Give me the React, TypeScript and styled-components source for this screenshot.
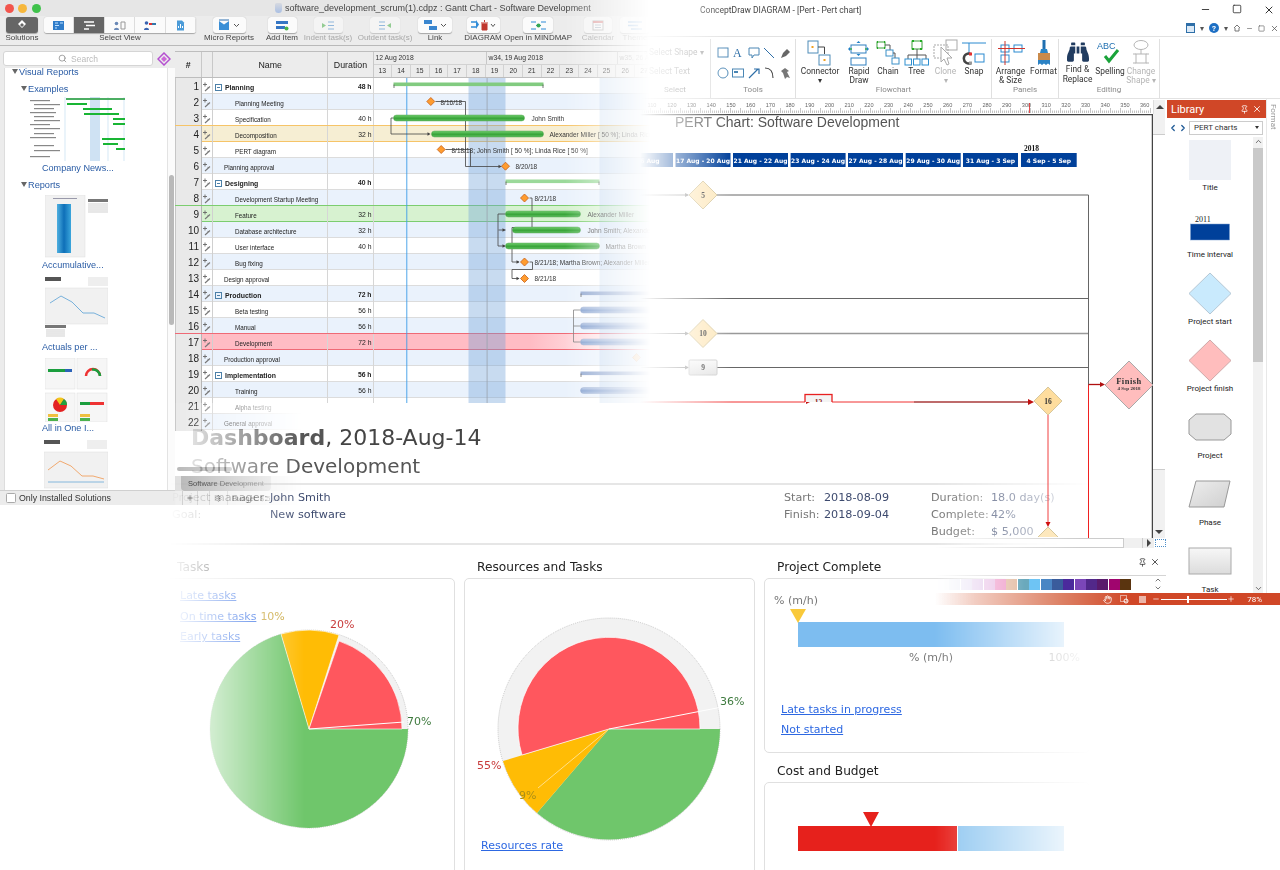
import React from 'react';
import styled, { createGlobalStyle } from 'styled-components';
import { Minus, Square, X, Pin, Hand, Search, ChevronLeft, ChevronRight, ChevronUp, ChevronDown, Plus, Settings } from 'lucide-react';
import { FaBinoculars } from 'react-icons/fa';

const SANS = `"Liberation Sans", Arial, sans-serif`;
const VERDANA = `"DejaVu Sans", Verdana, sans-serif`;
const SERIF = `"Liberation Serif", serif`;
const UI = `Roboto, "Liberation Sans", sans-serif`;

const Global = createGlobalStyle`
  html, body { margin: 0; padding: 0; background: #fff; }
  body { font-family: ${SANS}; }
`;

const Stage = styled.div`
  position: relative;
  width: 1280px;
  height: 870px;
  overflow: hidden;
  background: #fff;
`;

/* ---------- Gantt window ---------- */
const GanttWindow = styled.section`
  position: absolute;
  left: 0;
  top: 0;
  width: 660px;
  height: 505px;
  display: flex;
  flex-direction: column;
  background: #ececec;
  mask-image: linear-gradient(to right, #000 565px, transparent 650px);
  -webkit-mask-image: linear-gradient(to right, #000 565px, transparent 650px);
`;
const MacTitle = styled.div`
  height: 16px;
  display: flex;
  align-items: center;
  background: #e6e6e6;
  font-size: 9px;
  color: #444;
`;
const Lights = styled.div`
  width: 275px;
  display: flex;
  gap: 4.500px;
  padding-left: 4.500px;
  box-sizing: border-box;
`;
const Light = styled.span<{ $c: string }>`
  width: 9px;
  height: 9px;
  border-radius: 50%;
  background: ${p => p.$c};
`;
const DocGlyph = styled.span`
  width: 7px;
  height: 10px;
  margin-right: 3px;
  border-radius: 2px 2px 4px 4px;
  background: linear-gradient(#d6d9e0, #a9bfe3);
`;
const MacToolbar = styled.div`
  height: 30px;
  display: flex;
  border-bottom: 1px solid #b9b9b9;
  box-sizing: border-box;
`;
const ToolItem = styled.div<{ $w: number; $ml?: number; $dim?: boolean }>`
  width: ${p => p.$w}px;
  margin-left: ${p => p.$ml || 0}px;
  padding-top: 1px;
  display: flex;
  flex-direction: column;
  align-items: center;
  flex: none;
  color: ${p => (p.$dim ? '#a8a8a8' : '#444')};
`;
const ToolLabel = styled.span`
  font-size: 8px;
  line-height: 12px;
  margin-top: -1px;
  white-space: nowrap;
`;
const ToolButton = styled.div<{ $w: number; $dark?: boolean; $dim?: boolean }>`
  width: ${p => p.$w}px;
  height: 16px;
  flex: none;
  display: flex;
  align-items: center;
  justify-content: center;
  border-radius: 3px;
  background: ${p => (p.$dark ? '#666' : '#fbfbfb')};
  box-shadow: 0 0.5px 1px rgba(0, 0, 0, 0.3);
  opacity: ${p => (p.$dim ? 0.55 : 1)};
`;
const Segments = styled.div`
  display: flex;
  height: 16px;
  border-radius: 3px;
  overflow: hidden;
  flex: none;
  box-shadow: 0 0.5px 1px rgba(0, 0, 0, 0.3);
`;
const Segment = styled.div<{ $on?: boolean }>`
  width: 30.4px;
  display: flex;
  align-items: center;
  justify-content: center;
  background: ${p => (p.$on ? '#666' : '#fbfbfb')};
  border-right: 1px solid #ddd;
  box-sizing: border-box;
`;
const MacBody = styled.div`
  flex: 1;
  display: flex;
  min-height: 0;
`;
const Sidebar = styled.aside`
  width: 175px;
  flex: none;
  display: flex;
  flex-direction: column;
`;
const SearchRow = styled.div`
  height: 22px;
  display: flex;
  align-items: flex-end;
  padding: 0 0 2px 3px;
  gap: 4px;
  box-sizing: border-box;
`;
const SearchBox = styled.div`
  width: 150px;
  height: 15px;
  background: #fff;
  border: 1px solid #d5d5d5;
  border-radius: 3px;
  display: flex;
  align-items: center;
  justify-content: center;
  gap: 4px;
  font-size: 8.5px;
  color: #bbb;
  box-sizing: border-box;
`;
const TreeWrap = styled.div`
  height: 422px;
  display: flex;
  padding-left: 4px;
`;
const Tree = styled.div`
  flex: 1;
  background: #fff;
  overflow: hidden;
  border-left: 1px solid #ddd;
  padding-top: 3px;
`;
const SideScroll = styled.div`
  width: 8px;
  flex: none;
  background: #fbfbfb;
  border-left: 1px solid #e3e3e3;
  box-sizing: border-box;
  padding: 107px 1px 0 1px;
`;
const SideThumb = styled.div`
  height: 150px;
  border-radius: 3px;
  background: #b9b9b9;
`;
const TreeHead = styled.div<{ $l: number; $mt: number }>`
  margin: ${p => p.$mt}px 0 0 ${p => p.$l}px;
  height: 14px;
  font-size: 9.2px;
  line-height: 14px;
  color: #2a5ca5;
  white-space: nowrap;
  &::before {
    content: '';
    display: inline-block;
    border: 3px solid transparent;
    border-top: 5px solid #666;
    border-bottom: 0;
    margin-right: 1px;
    vertical-align: 1px;
  }
`;
const ThumbBox = styled.div<{ $ml: number; $mt: number }>`
  margin: ${p => p.$mt}px 0 0 ${p => p.$ml}px;
  line-height: 0;
`;
const Caption = styled.div<{ $mt: number }>`
  margin: ${p => p.$mt}px 0 0 37px;
  height: 14px;
  line-height: 14px;
  font-size: 9.100px;
  color: #2a5ca5;
  white-space: nowrap;
`;
const SideFoot = styled.label`
  flex: 1;
  display: flex;
  align-items: center;
  gap: 3px;
  padding-left: 6px;
  font-size: 8.8px;
  color: #333;
  background: #ececec;
  border-top: 1px solid #d0d0d0;
`;
const Check = styled.span`
  width: 8px;
  height: 8px;
  background: #fff;
  border: 1px solid #aaa;
  border-radius: 1.5px;
`;
const TableWrap = styled.div`
  flex: 1;
  position: relative;
  padding-top: 5px;
  overflow: hidden;
  display: flex;
  flex-direction: column;
`;
const TableHead = styled.div`
  display: grid;
  grid-template-columns: 26.5px 11.5px 114.5px 46px 1fr;
  height: 27px;
  flex: none;
  box-sizing: border-box;
  background: #ececec;
  border-top: 1px solid #bdbdbd;
  border-bottom: 1px solid #bdbdbd;
`;
const RowsBox = styled.div`
  height: 384px;
  flex: none;
  overflow: hidden;
  background: #fff;
`;
const PillRow = styled.div`
  height: 14px;
  flex: none;
  display: flex;
  align-items: center;
  padding-left: 2px;
  background: #fff;
`;
const Pill = styled.div`
  width: 55px;
  height: 4px;
  border-radius: 2px;
  background: #b5b5b5;
`;
const TabRow = styled.div`
  height: 15px;
  flex: none;
  padding-left: 6px;
  background: #dedede;
`;
const SheetTab = styled.div`
  width: 90px;
  height: 15px;
  line-height: 15px;
  text-align: center;
  font-size: 7.500px;
  color: #222;
  background: #b4b4b4;
  border-radius: 0 0 4px 4px;
`;
const FootBar = styled.div`
  flex: 1;
  display: flex;
  align-items: center;
  padding-left: 7px;
  font-size: 7.500px;
  color: #444;
  background: #eee;
`;
const FootCell = styled.div<{ $w: number }>`
  width: ${p => p.$w}px;
  height: 100%;
  flex: none;
  display: flex;
  align-items: center;
  justify-content: center;
  border-left: 1px solid #ccc;
  box-sizing: border-box;
`;
const HeadCell = styled.div<{ $bold?: boolean }>`
  display: flex;
  align-items: center;
  justify-content: center;
  font-size: 8.8px;
  font-weight: ${p => (p.$bold ? 700 : 400)};
  color: #222;
  border-right: 1px solid #c8c8c8;
  border-left: 1px solid transparent;
`;
const Timehead = styled.div`
  display: flex;
  flex-direction: column;
  font-size: 6.8px;
  color: #333;
  overflow: hidden;
`;
const Weeks = styled.div`
  display: flex;
  height: 13px;
  border-bottom: 1px solid #d2d2d2;
`;
const Week = styled.div<{ $w: number; $dim?: boolean }>`
  width: ${p => p.$w}px;
  flex: none;
  line-height: 12px;
  padding-left: 2px;
  box-sizing: border-box;
  white-space: nowrap;
  border-right: 1px solid #c8c8c8;
  color: ${p => (p.$dim ? '#999' : '#333')};
`;
const Days = styled.div`
  display: flex;
  flex: 1;
`;
const Day = styled.div`
  width: 18.7px;
  flex: none;
  text-align: center;
  line-height: 12px;
  border-right: 1px solid #d2d2d2;
  box-sizing: border-box;
`;
const TONES: Record<string, { bg: string; line: string }> = {
  yellow: { bg: '#f6eed3', line: '#f6c468' },
  green: { bg: '#d7f2d0', line: '#7ccd6f' },
  red: { bg: 'linear-gradient(to right, #ffbcc4 355px, transparent 470px)', line: '#ef6a76' },
};
const Row = styled.div<{ $alt: boolean; $tone?: string }>`
  display: grid;
  grid-template-columns: 26.5px 11.5px 114.5px 46px 1fr;
  height: 16.03px;
  box-sizing: border-box;
  font-size: 6.3px;
  color: #222;
  background: ${p => (p.$tone ? TONES[p.$tone].bg : p.$alt ? '#eaf2fc' : '#fff')};
  border-bottom: 1px solid ${p => (p.$tone ? TONES[p.$tone].line : '#dcdcdc')};
  box-shadow: ${p => (p.$tone ? `0 -1px 0 ${TONES[p.$tone].line}` : 'none')};
  position: relative;
`;
const NumCell = styled.div`
  background: #e9e9e9;
  text-align: right;
  padding-right: 1.5px;
  font-size: 10px;
  line-height: 17px;
  color: #222;
  border-left: 1px solid #c6c6c6;
  border-right: 1px solid #b5b5b5;
`;
const IconCell = styled.div`
  display: flex;
  align-items: center;
  justify-content: center;
  border-right: 1px solid #d0d0d0;
`;
const NameCell = styled.div<{ $l: number; $bold: boolean }>`
  display: flex;
  align-items: center;
  gap: 3px;
  padding: 1px 0 0 ${p => p.$l}px;
  font-weight: ${p => (p.$bold ? 700 : 400)};
  font-size: ${p => (p.$bold ? 6.9 : 6.3)}px;
  border-right: 1px solid #d6d6d6;
  white-space: nowrap;
`;
const Collapse = styled.span`
  width: 5px;
  height: 5px;
  border: 0.5px solid #4c80a8;
  position: relative;
  flex: none;
  &::after {
    content: '';
    position: absolute;
    left: 1px;
    right: 1px;
    top: 2.2px;
    height: 0.6px;
    background: #4c80a8;
  }
`;
const DurCell = styled.div<{ $bold: boolean }>`
  text-align: right;
  padding-right: 1px;
  line-height: 17px;
  font-size: 6.8px;
  font-weight: ${p => (p.$bold ? 700 : 400)};
  border-right: 1px solid #d6d6d6;
`;
const ChartLayer = styled.svg`
  position: absolute;
  left: 198.5px;
  top: 32px;
  pointer-events: none;
  text {
    font-family: ${SANS};
    font-size: 6.5px;
    fill: #333;
  }
`;

/* ---------- Dashboard ---------- */
const Dashboard = styled.section`
  position: absolute;
  left: 164px;
  top: 403px;
  width: 936px;
  height: 467px;
  overflow: hidden;
  background: #fff;
  font-family: ${VERDANA};
  mask-image: linear-gradient(to right, transparent 4px, #000 140px, #000 771px, transparent 928px);
  -webkit-mask-image: linear-gradient(to right, transparent 4px, #000 140px, #000 771px, transparent 928px);
`;
const DashHeader = styled.header`
  height: 82px;
  box-sizing: border-box;
  padding: 21px 0 0 27px;
  border-bottom: 2px solid #e6e6e6;
`;
const DashTitle = styled.h1`
  margin: 0;
  font-size: 22px;
  line-height: 28px;
  font-weight: 400;
  color: #444;
  white-space: nowrap;
  b { font-weight: 700; color: #555; }
`;
const DashSub = styled.h2`
  margin: 0;
  font-size: 20px;
  line-height: 28px;
  font-weight: 400;
  color: #555;
`;
const InfoBar = styled.div`
  height: 60px;
  display: flex;
  padding: 4px 0 0 8px;
  box-sizing: border-box;
  border-bottom: 2px solid #e6e6e6;
  font-size: 11.2px;
  line-height: 17px;
`;
const InfoCol = styled.div<{ $w: number }>`
  width: ${p => p.$w}px;
  flex: none;
`;
const InfoLine = styled.div`
  display: flex;
  white-space: nowrap;
`;
const InfoKey = styled.span<{ $w: number }>`
  width: ${p => p.$w}px;
  flex: none;
  color: #777;
`;
const InfoVal = styled.span`
  color: #3d4a6e;
`;
const Panels = styled.div`
  display: grid;
  grid-template-columns: 291px 291px 326px;
  column-gap: 9px;
  margin-right: -20px;
`;
const PanelCol = styled.div`
  display: flex;
  flex-direction: column;
`;
const PanelHead = styled.h3<{ $h: number; $pt: number }>`
  margin: 0;
  height: ${p => p.$h}px;
  flex: none;
  padding: ${p => p.$pt}px 0 0 13px;
  box-sizing: border-box;
  font-size: 12.2px;
  line-height: 14px;
  font-weight: 400;
  color: #222;
`;
const PanelBox = styled.div<{ $h: number }>`
  position: relative;
  height: ${p => p.$h}px;
  flex: none;
  border: 1px solid #e0e0e0;
  border-radius: 5px;
  box-sizing: border-box;
`;
const LinkList = styled.div`
  position: absolute;
  left: 15px;
  top: 10px;
  display: flex;
  flex-direction: column;
  gap: 6px;
  font-size: 11px;
  line-height: 14.5px;
  white-space: nowrap;
`;
const LinkA = styled.a`
  color: #2d68e2;
  text-decoration: underline;
`;
const Pct = styled.span`
  margin-left: 4px;
  color: #c9a63c;
`;
const RateLink = styled(LinkA)`
  position: absolute;
  left: 16px;
  top: 260px;
  font-size: 11px;
`;
const PieSvg = styled.svg`
  display: block;
  text { font-family: ${VERDANA}; font-size: 11px; }
`;
const GaugeTop = styled.div`
  padding: 14px 0 0 9px;
  font-size: 11px;
  line-height: 15px;
  color: #777;
`;
const GaugeWrap = styled.div<{ $mt: number }>`
  position: relative;
  width: 266px;
  height: 25px;
  margin: ${p => p.$mt}px 0 0 33px;
  display: flex;
`;
const BarPart = styled.div<{ $w: number; $c: string }>`
  width: ${p => p.$w}px;
  flex: none;
  background: ${p => p.$c};
`;
const Marker = styled.span<{ $x: number; $c: string; $h: number }>`
  position: absolute;
  left: ${p => p.$x}px;
  top: ${p => -p.$h + 1}px;
  width: 0;
  height: 0;
  border-left: 8px solid transparent;
  border-right: 8px solid transparent;
  border-top: ${p => p.$h}px solid ${p => p.$c};
  margin-left: -8px;
`;
const GaugeLabels = styled.div`
  position: relative;
  width: 266px;
  height: 15px;
  margin: 3px 0 0 33px;
  text-align: center;
  font-size: 11px;
  line-height: 15px;
  color: #777;
`;
const GaugeEnd = styled.span`
  position: absolute;
  right: -16px;
  top: 0;
`;
const LinksBlock = styled.div`
  display: flex;
  flex-direction: column;
  gap: 5.500px;
  margin: 38px 0 0 16px;
  font-size: 11px;
  line-height: 14.5px;
`;

/* ---------- Diagram window ---------- */
const DiagramWindow = styled.section`
  position: absolute;
  left: 600px;
  top: 0;
  width: 680px;
  height: 605px;
  display: flex;
  flex-direction: column;
  font-family: ${UI};
  mask-image: linear-gradient(to right, transparent 40px, #000 132px);
  -webkit-mask-image: linear-gradient(to right, transparent 40px, #000 132px);
`;
const WinTitle = styled.div`
  height: 20px;
  display: flex;
  align-items: center;
  padding-left: 100px;
  font-size: 8.500px;
  color: #444;
`;
const WinControls = styled.div`
  margin-left: auto;
  display: flex;
  gap: 21px;
  padding-right: 5px;
  color: #333;
`;
const WinRow2 = styled.div`
  height: 17px;
  display: flex;
  justify-content: flex-end;
  align-items: center;
  gap: 5px;
  padding-right: 1px;
  border-bottom: 1px solid #e2e2e2;
  box-sizing: border-box;
  color: #555;
  font-size: 8px;
`;
const Ribbon = styled.div`
  height: 62px;
  display: flex;
  padding: 2px 0 0 40px;
  box-sizing: border-box;
  border-bottom: 1px solid #e2e2e2;
`;
const RibbonGroup = styled.div<{ $w: number }>`
  width: ${p => p.$w}px;
  flex: none;
  display: flex;
  flex-direction: column;
  border-right: 1px solid #e0e0e0;
  box-sizing: border-box;
`;
const GroupBody = styled.div`
  flex: 1;
  display: flex;
  min-height: 0;
`;
const GroupName = styled.div`
  height: 14px;
  text-align: center;
  font-size: 8px;
  line-height: 12px;
  color: #8a8a8a;
`;
const BigItem = styled.div<{ $w: number; $dim?: boolean }>`
  width: ${p => p.$w}px;
  flex: none;
  display: flex;
  flex-direction: column;
  align-items: center;
  font-size: 8.400px;
  line-height: 9.4px;
  text-align: center;
  color: ${p => (p.$dim ? '#b5b5b5' : '#333')};
  white-space: pre-line;
  padding-top: 1px;
`;
const BigIcon = styled.div`
  height: 26px;
  display: flex;
  align-items: center;
  justify-content: center;
  margin-bottom: 1px;
`;
const ToolGrid = styled.div`
  display: grid;
  grid-template-columns: repeat(5, 15.4px);
  grid-auto-rows: 20px;
  padding: 8px 0 0 6px;
`;
const SelectStack = styled.div`
  display: flex;
  flex-direction: column;
  gap: 9px;
  padding: 8px 0 0 4px;
  font-size: 8.4px;
  color: #aaa;
  white-space: nowrap;
`;
const Workspace = styled.div`
  flex: 1;
  display: flex;
  min-height: 0;
`;
const MainCol = styled.div`
  width: 566px;
  flex: none;
  display: flex;
  flex-direction: column;
`;
const RulerRow = styled.div`
  height: 15px;
  display: flex;
  padding-top: 1px;
  box-sizing: border-box;
  margin-left: 40px;
  margin-right: 1px;
`;
const RulerSvg = styled.svg`
  flex: 1;
  height: 14px;
  text { font-family: ${SANS}; font-size: 5.6px; fill: #666; }
`;
const CanvasRow = styled.div`
  height: 424px;
  display: flex;
`;
const CanvasSvg = styled.svg`
  display: block;
  width: 553px;
  height: 424px;
  flex: none;
`;
const VScroll = styled.div`
  width: 12px;
  flex: none;
  display: flex;
  flex-direction: column;
  background: #f1f1f1;
`;
const ScrollThumb = styled.div`
  height: 336px;
  margin-top: 20px;
  background: #fff;
  border-top: 1px solid #ccc;
  border-bottom: 1px solid #ccc;
  box-sizing: border-box;
`;
const ScrollArrow = styled.div<{ $dir: 'up' | 'down' | 'right' }>`
  width: 0;
  height: 0;
  align-self: center;
  ${p =>
    p.$dir === 'up'
      ? 'border-left:4px solid transparent;border-right:4px solid transparent;border-bottom:4px solid #444;'
      : p.$dir === 'down'
      ? 'border-left:4px solid transparent;border-right:4px solid transparent;border-top:4px solid #444;margin-top:auto;margin-bottom:4px;'
      : 'border-top:4px solid transparent;border-bottom:4px solid transparent;border-left:4px solid #444;'}
`;
const RulerArrowBox = styled.div`
  width: 12px;
  flex: none;
  display: flex;
  align-items: center;
  justify-content: center;
  background: #f1f1f1;
  border-left: 1px solid #ddd;
  box-sizing: border-box;
`;
const HScrollRow = styled.div`
  height: 10px;
  display: flex;
  align-items: stretch;
  padding-left: 335px;
  mask-image: linear-gradient(to right, transparent 335px, #000 480px);
  -webkit-mask-image: linear-gradient(to right, transparent 335px, #000 480px);
`;
const HTrack = styled.div`
  flex: 1;
  background: #fff;
  border: 1px solid #ccc;
  border-left: 0;
`;
const HThumb = styled.div`
  width: 18px;
  flex: none;
  background: #f0f0f0;
`;
const HArrow = styled.div`
  width: 12px;
  flex: none;
  display: flex;
  align-items: center;
  justify-content: center;
  background: #eee;
  border-left: 1px solid #ccc;
  box-sizing: border-box;
`;
const HCorner = styled.div`
  width: 11px;
  flex: none;
  box-sizing: border-box;
  border: 1px dotted #4f8fc8;
  margin: 1px 0 1px 1px;
`;
const PalHead = styled.div`
  height: 27px;
  display: flex;
  justify-content: flex-end;
  align-items: center;
  gap: 3px;
  padding: 1px 6px 0 0;
  box-sizing: border-box;
  color: #333;
`;
const Palette = styled.div`
  height: 17px;
  display: flex;
  align-items: center;
  margin-left: 335px;
  padding: 0 4px 0 3px;
  border-top: 1px solid #d4d4d4;
  box-sizing: border-box;
  background: #fff;
  mask-image: linear-gradient(to right, transparent 0, #000 90px);
  -webkit-mask-image: linear-gradient(to right, transparent 0, #000 90px);
`;
const Swatch = styled.span<{ $c: string }>`
  width: 11px;
  height: 11px;
  flex: none;
  background: ${p => p.$c};
  margin-right: 0.4px;
`;
const PalSpin = styled.div`
  margin-left: auto;
  display: flex;
  flex-direction: column;
  color: #333;
  line-height: 0;
`;
const Library = styled.aside`
  width: 99px;
  flex: none;
  margin: 1px 0 0 1px;
  display: flex;
  flex-direction: column;
  font-size: 8px;
  color: #222;
  background: #fff;
`;
const LibHead = styled.div`
  height: 18px;
  background: #d04727;
  color: #fff;
  display: flex;
  align-items: center;
  padding: 0 4px;
  gap: 3px;
  font-size: 11px;
`;
const LibTitle = styled.span`
  margin-right: auto;
`;
const LibPick = styled.div`
  height: 19px;
  display: flex;
  align-items: center;
  padding-left: 1px;
  color: #1f5a96;
  box-sizing: border-box;
`;
const LibSelect = styled.div`
  width: 74px;
  height: 14px;
  margin-left: 1px;
  display: flex;
  align-items: center;
  justify-content: space-between;
  padding: 0 3px 0 4px;
  border: 1px solid #ccc;
  box-sizing: border-box;
  color: #333;
  font-size: 8px;
  &::after {
    content: '';
    border-left: 2.5px solid transparent;
    border-right: 2.5px solid transparent;
    border-top: 3px solid #333;
  }
`;
const LibList = styled.div`
  flex: 1;
  display: flex;
  min-height: 0;
`;
const LibItems = styled.div`
  width: 86px;
  flex: none;
  overflow: hidden;
`;
const LibItem = styled.div`
  height: 67px;
  display: flex;
  flex-direction: column;
  align-items: center;
  line-height: 12px;
  svg { display: block; flex: none; }
  svg text { font-family: ${SERIF}; font-size: 8px; fill: #222; }
`;
const LibScroll = styled.div`
  width: 10px;
  flex: none;
  display: flex;
  flex-direction: column;
  align-items: center;
  background: #f1f1f1;
  color: #444;
`;
const LibThumb = styled.div`
  width: 100%;
  height: 214px;
  flex: none;
  margin-top: 2px;
  background: #c9c9c9;
`;
const SpinDown = styled.span`
  margin-top: auto;
  line-height: 0;
`;
const FormatTab = styled.div`
  flex: 1;
  border-left: 1px solid #e8e8e8;
  display: flex;
  justify-content: flex-start;
  align-items: center;
  padding-top: 5px;
  font-size: 8px;
  color: #999;
  writing-mode: vertical-rl;
`;
const StatusBar = styled.footer`
  height: 12px;
  flex: none;
  display: flex;
  align-items: center;
  justify-content: flex-end;
  padding-right: 18px;
  color: #fff;
  font-size: 8px;
  background: linear-gradient(to right, transparent 335px, #f2cdc2 375px, #dd8266 460px, #d04727 530px);
`;
const StatusSlot = styled.span<{ $ml: number }>`
  display: flex;
  margin-left: ${p => p.$ml}px;
`;
const ZoomSlider = styled.div`
  position: relative;
  width: 66px;
  height: 1px;
  background: #fff;
  &::after {
    content: '';
    position: absolute;
    left: 26px;
    top: -3px;
    width: 2px;
    height: 7px;
    background: #fff;
  }
`;

/* ---------- data ---------- */
const rows: { name: string; l: number; s?: boolean; d?: string; t?: string }[] = [
  { name: 'Planning', l: 0, s: true, d: '48 h' },
  { name: 'Planning Meeting', l: 2 },
  { name: 'Specification', l: 2, d: '40 h' },
  { name: 'Decomposition', l: 2, d: '32 h', t: 'yellow' },
  { name: 'PERT diagram', l: 2 },
  { name: 'Planning approval', l: 1 },
  { name: 'Designing', l: 0, s: true, d: '40 h' },
  { name: 'Development Startup Meeting', l: 2 },
  { name: 'Feature', l: 2, d: '32 h', t: 'green' },
  { name: 'Database architecture', l: 2, d: '32 h' },
  { name: 'User interface', l: 2, d: '40 h' },
  { name: 'Bug fixing', l: 2 },
  { name: 'Design approval', l: 1 },
  { name: 'Production', l: 0, s: true, d: '72 h' },
  { name: 'Beta testing', l: 2, d: '56 h' },
  { name: 'Manual', l: 2, d: '56 h' },
  { name: 'Development', l: 2, d: '72 h', t: 'red' },
  { name: 'Production approval', l: 1 },
  { name: 'Implementation', l: 0, s: true, d: '56 h' },
  { name: 'Training', l: 2, d: '56 h' },
  { name: 'Alpha testing', l: 2 },
  { name: 'General approval', l: 1 },
];

const RowGlyph = () => (
  <svg width="10" height="10" viewBox="0 0 10 10">
    <path d="M3 0.5v4M1 2.5h4" stroke="#666" strokeWidth="0.9" />
    <path d="M3 9l5-4.5M5.5 5.2l2 0.5" stroke="#777" strokeWidth="1.1" fill="none" />
  </svg>
);

const Milestone = ({ x, y, o = 1 }: { x: number; y: number; o?: number }) => (
  <path
    d={`M${x} ${y - 4}L${x + 4} ${y}L${x} ${y + 4}L${x - 4} ${y}Z`}
    fill="#ff9c2f"
    stroke="#c4601a"
    strokeWidth="0.8"
    opacity={o}
  />
);
const Bar = ({ x, w, y, c }: { x: number; w: number; y: number; c: string }) => (
  <rect x={x} y={y - 3} width={w} height={6} rx={3} fill={`url(#${c})`} stroke={c === 'gb' ? '#3e9b3e' : '#7a93c0'} strokeWidth="0.4" />
);
const Summary = ({ x, w, y, c }: { x: number; w: number; y: number; c: string }) => (
  <g>
    <rect x={x} y={y - 2} width={w} height={3.6} fill={c} />
    <path d={`M${x + 0.5} ${y}v3.5M${x + w - 0.5} ${y}v3.5`} stroke="#555" strokeWidth="0.8" />
  </g>
);
const Arrow = ({ x, y, c = '#444' }: { x: number; y: number; c?: string }) => (
  <path d={`M${x} ${y}l-3 -1.8v3.6Z`} fill={c} />
);

const GanttChart = () => (
  <ChartLayer width="287" height="360" viewBox="373.5 78.5 287 360">
    <defs>
      <linearGradient id="gb" x1="0" y1="0" x2="0" y2="1">
        <stop offset="0" stopColor="#74cf72" />
        <stop offset="0.55" stopColor="#37a438" />
        <stop offset="1" stopColor="#62bf62" />
      </linearGradient>
      <linearGradient id="bb" x1="0" y1="0" x2="0" y2="1">
        <stop offset="0" stopColor="#b7c8e6" />
        <stop offset="0.55" stopColor="#7e9ccd" />
        <stop offset="1" stopColor="#a2b7dc" />
      </linearGradient>
    </defs>
    <rect x="468" y="78.5" width="37" height="360" fill="rgba(110,160,215,0.38)" />
    <rect x="599" y="78.5" width="60" height="360" fill="rgba(110,160,215,0.2)" />
    <path d="M486.6 78.5v360" stroke="#9ba3ad" strokeWidth="0.8" />
    <path d="M406.3 78.5v360" stroke="#3c9ce8" strokeWidth="0.9" />

    <Summary x={393} w={150} y={85} c="#82cb80" />
    <Summary x={505} w={94} y={182} c="#9bd99a" />
    <Summary x={580} w={90} y={294} c="#8fa6cf" />
    <Summary x={580} w={90} y={374} c="#8fa6cf" />

    <g fill="none" stroke="#444" strokeWidth="0.8">
      <path d="M435 102h30v65h36" />
      <path d="M393 118.5h-2.500v16h37" />
      <path d="M445 150h25v17" />
      <path d="M529 198.500h2.500v29.500h-20v34.500h7" />
      <path d="M505 214.500h-7.500v32h7M498 230.500h7" />
      <path d="M529 262.500h3v7.500h-20.500v9h7" />
      <path d="M580 310.500h-7v32h7M573 326.500h7" stroke="#777" />
    </g>
    <Arrow x={501} y={167} />
    <Arrow x={430} y={134.5} />
    <Arrow x={505} y={230.5} />
    <Arrow x={505} y={246.5} />
    <Arrow x={519} y={262.5} />
    <Arrow x={519} y={279} />

    <Bar x={393} w={131} y={118.5} c="gb" />
    <Bar x={431} w={112} y={134.5} c="gb" />
    <Bar x={505} w={75} y={214.5} c="gb" />
    <Bar x={512} w={68} y={230.5} c="gb" />
    <Bar x={505} w={94} y={246.5} c="gb" />
    <Bar x={580} w={90} y={310.5} c="bb" />
    <Bar x={580} w={90} y={326.5} c="bb" />
    <Bar x={580} w={90} y={342.5} c="bb" />
    <Bar x={580} w={90} y={391} c="bb" />

    <Milestone x={430.3} y={102} />
    <Milestone x={440.7} y={150} />
    <Milestone x={505} y={166.7} />
    <Milestone x={524} y={198.5} />
    <Milestone x={524} y={262.5} />
    <Milestone x={524} y={279} />
    <Milestone x={636} y={358} o={0.5} />

    <text x="440" y="105">8/16/18</text>
    <text x="531" y="121">John Smith</text>
    <text x="549" y="137" fill="#666">Alexander Miller [ 50 %]; Linda Rice</text>
    <text x="451" y="153">8/18/18; John Smith [ 50 %]; Linda Rice [ 50 %]</text>
    <text x="515" y="169">8/20/18</text>
    <text x="534" y="201">8/21/18</text>
    <text x="587" y="217">Alexander Miller</text>
    <text x="587" y="233">John Smith; Alexander</text>
    <text x="605" y="249">Martha Brown</text>
    <text x="534" y="265">8/21/18; Martha Brown; Alexander Miller</text>
    <text x="534" y="281.500">8/21/18</text>
  </ChartLayer>
);

const Mini = ({ k, light }: { k: string; light?: boolean }) => {
  const main = light ? '#fff' : '#2f7cc9';
  switch (k) {
    case 'solutions':
      return (
        <svg width="12" height="12" viewBox="0 0 12 12">
          <path d="M6 1l4 4-4 4-4-4z" fill="#fff" />
          <path d="M6 4l2 2-2 2-2-2z" fill="#666" />
        </svg>
      );
    case 'v1':
      return (
        <svg width="13" height="11" viewBox="0 0 13 11">
          <rect x="1" y="1" width="11" height="9" fill="#2f7cc9" />
          <path d="M3 3h3M3 5.500h4M3 8h2M8 3h3" stroke="#bfe0ff" strokeWidth="1" />
        </svg>
      );
    case 'v2':
      return (
        <svg width="13" height="11" viewBox="0 0 13 11">
          <path d="M1 2h10M3 5.500h9M1 9h5" stroke="#fff" strokeWidth="1.3" />
        </svg>
      );
    case 'v3':
      return (
        <svg width="13" height="11" viewBox="0 0 13 11">
          <circle cx="3.500" cy="3.500" r="1.800" fill="#6a88b6" />
          <path d="M1 10c0-3 5-3 5 0z" fill="#6a88b6" />
          <path d="M8 2h4v7H8z" fill="none" stroke="#999" />
        </svg>
      );
    case 'v4':
      return (
        <svg width="13" height="11" viewBox="0 0 13 11">
          <circle cx="3.500" cy="3" r="1.800" fill="#3a63b0" />
          <path d="M1 10c0-3 5-3 5 0z" fill="#3a63b0" />
          <path d="M6 4h3" stroke="#d33" strokeWidth="2" />
          <path d="M9 4h4" stroke="#37a" strokeWidth="2" />
        </svg>
      );
    case 'v5':
      return (
        <svg width="13" height="11" viewBox="0 0 13 11">
          <path d="M3 0.500h5l2 2V10.500H3z" fill="#4b9bd8" />
          <path d="M4.500 8v-2M6.500 8V4M8.500 8V6" stroke="#fff" />
        </svg>
      );
    case 'micro':
      return (
        <svg width="22" height="12" viewBox="0 0 22 12">
          <path d="M1 2l5 3.500L11 2v9H1z" fill="#3b8fd6" />
          <path d="M1 1h10" stroke="#2d6fae" />
          <path d="M16 5l2.500 2.500L21 5" fill="none" stroke="#555" />
        </svg>
      );
    case 'add':
      return (
        <svg width="14" height="11" viewBox="0 0 14 11">
          <rect x="1" y="1" width="12" height="3" fill="#3576c4" />
          <rect x="1" y="6" width="9" height="3" fill="#3576c4" />
          <circle cx="11.500" cy="8.500" r="2" fill="#49b54a" />
        </svg>
      );
    case 'indent':
      return (
        <svg width="14" height="11" viewBox="0 0 14 11">
          <path d="M7 2h6M7 5.500h6M7 9h6" stroke="#4a8fd0" strokeWidth="1.200" />
          <path d="M1 3v5l4-2.500z" fill="#4cb24c" />
        </svg>
      );
    case 'outdent':
      return (
        <svg width="14" height="11" viewBox="0 0 14 11">
          <path d="M1 2h6M1 5.500h6M1 9h6" stroke="#4a8fd0" strokeWidth="1.200" />
          <path d="M13 3v5l-4-2.500z" fill="#4cb24c" />
        </svg>
      );
    case 'link':
      return (
        <svg width="24" height="12" viewBox="0 0 24 12">
          <rect x="1" y="1" width="8" height="4" fill="#3a86cf" />
          <rect x="6" y="7" width="8" height="4" fill="#3a86cf" />
          <path d="M18 5l2.500 2.500L23 5" fill="none" stroke="#555" />
        </svg>
      );
    case 'diagram':
      return (
        <svg width="26" height="12" viewBox="0 0 26 12">
          <path d="M1 3h5M1 8h5" stroke="#2f8cd8" strokeWidth="1.400" />
          <path d="M6 1l3 4.500L6 10z" fill="#2f8cd8" />
          <path d="M11 4h7M14.500 1v2M12 5h5v6h-5z" stroke="#c0362c" fill="#c0362c" strokeWidth="1" />
          <path d="M21 5l2 2.500L25 5" fill="none" stroke="#555" />
        </svg>
      );
    case 'mindmap':
      return (
        <svg width="17" height="11" viewBox="0 0 17 11">
          <path d="M1 2h5M1 9h5M11 2h5M11 9h5M6 5.500h5" stroke="#2f8cd8" strokeWidth="1.200" />
          <circle cx="8.500" cy="5.500" r="2" fill="#35a853" />
        </svg>
      );
    case 'calendar':
      return (
        <svg width="12" height="12" viewBox="0 0 12 12">
          <rect x="1" y="2" width="10" height="9" fill="#fff" stroke="#999" />
          <path d="M1 3h10" stroke="#d86a6a" strokeWidth="2" />
          <path d="M3 6h6M3 8.500h6" stroke="#9ab" />
        </svg>
      );
    default:
      return (
        <svg width="16" height="11" viewBox="0 0 16 11">
          <path d="M1 2h14M1 5.500h10M4 9h11" stroke={main} strokeWidth="1.500" />
        </svg>
      );
  }
};

const toolItems: { label: string; w: number; ml?: number; bw: number; k: string; dim?: boolean }[] = [
  { label: 'Micro Reports', w: 66, bw: 33, k: 'micro' },
  { label: 'Add Item', w: 40, bw: 29, k: 'add' },
  { label: 'Indent task(s)', w: 52, bw: 29, k: 'indent', dim: true },
  { label: 'Outdent task(s)', w: 62, bw: 30, k: 'outdent', dim: true },
  { label: 'Link', w: 38, bw: 34, k: 'link' },
  { label: 'DIAGRAM', w: 58, bw: 33, k: 'diagram' },
  { label: 'Open in MINDMAP', w: 52, bw: 30, k: 'mindmap' },
  { label: 'Calendar', w: 40, ml: 14, bw: 28, k: 'calendar', dim: true },
  { label: 'Theme', w: 34, bw: 30, k: 'theme', dim: true },
];

/* thumbnails in the tree */
const ThumbGantt = () => (
  <svg width="97" height="64" viewBox="0 0 97 64">
    <rect x="62" width="10" height="64" fill="#cfe2f3" />
    <path d="M37 0v64M80 0v64M96 0v64" stroke="#b9d8ef" strokeWidth="0.6" />
    {[3, 7, 11, 15, 19, 23, 27, 31, 36, 40, 48, 53, 59].map((y, i) => (
      <rect key={y} x={i % 3 === 0 ? 2 : 6} y={y} width={i % 2 ? 26 : 20} height="1.200" fill="#888" />
    ))}
    <path d="M38 2h59" stroke="#4cae63" strokeWidth="2" />
    <path d="M39 7h20M55 12h29M56 17h35M85 22h12M85 27h12M74 42h23M75 47h15M88 52h9" stroke="#19b534" strokeWidth="1.800" />
  </svg>
);
const ThumbAcc = () => (
  <svg width="63" height="63" viewBox="0 0 63 63">
    <defs>
      <linearGradient id="acc" x1="0" x2="1" y1="0" y2="0">
        <stop offset="0" stopColor="#4fb0e0" />
        <stop offset="0.5" stopColor="#0e6fb8" />
        <stop offset="1" stopColor="#3ba6dc" />
      </linearGradient>
    </defs>
    <rect x="0" y="0" width="40" height="62" fill="#f1f1f1" stroke="#ddd" strokeWidth="0.5" />
    <rect x="8" y="3" width="24" height="1" fill="#99a" />
    <rect x="12" y="9" width="14" height="49" fill="url(#acc)" />
    <rect x="43" y="4" width="20" height="3" fill="#777" />
    <path d="M43 9h20M43 11h20M43 13h20M43 15h20M43 17h20" stroke="#bbb" strokeWidth="0.7" />
  </svg>
);
const ThumbActuals = () => (
  <svg width="63" height="61" viewBox="0 0 63 61">
    <rect x="0" y="0" width="16" height="4" fill="#555" />
    <rect x="43" y="0" width="20" height="9" fill="#eee" />
    <rect x="0" y="11" width="63" height="36" fill="#f1f1f1" stroke="#ddd" strokeWidth="0.5" />
    <path d="M5 26L16 19L27 25L38 36L49 36L60 41" fill="none" stroke="#6aa9d8" strokeWidth="0.9" />
    <rect x="0" y="48" width="21" height="3" fill="#777" />
    <path d="M1 53h19M1 55h19M1 57h19M1 59h19" stroke="#bbb" strokeWidth="0.7" />
  </svg>
);
const ThumbAll = () => (
  <svg width="63" height="64" viewBox="0 0 63 64">
    <rect x="0" y="0" width="30" height="31" fill="#f6f6f6" stroke="#ddd" strokeWidth="0.5" />
    <rect x="32" y="0" width="30" height="31" fill="#f6f6f6" stroke="#ddd" strokeWidth="0.5" />
    <rect x="0" y="35" width="30" height="29" fill="#f6f6f6" stroke="#ddd" strokeWidth="0.5" />
    <rect x="32" y="35" width="30" height="29" fill="#f6f6f6" stroke="#ddd" strokeWidth="0.5" />
    <rect x="3" y="11" width="24" height="3" fill="#1b9e3e" />
    <rect x="20" y="11" width="7" height="3" fill="#2b63b8" />
    <path d="M41 18a7 7 0 0 1 14 0" fill="none" stroke="#e33" strokeWidth="2.500" />
    <path d="M47 11.500a7 7 0 0 1 8 6.500" fill="none" stroke="#1b9e3e" strokeWidth="2.500" />
    <circle cx="15" cy="47" r="7" fill="#e32222" />
    <path d="M15 47l-4-6a7 7 0 0 1 8 0z" fill="#f2c71c" />
    <path d="M15 47l4-6a7 7 0 0 1 3 6z" fill="#20a040" />
    <rect x="35" y="44" width="24" height="3" fill="#e33" />
    <rect x="35" y="44" width="10" height="3" fill="#1b9e3e" />
    <rect x="3" y="56" width="10" height="3" fill="#f0c040" />
    <rect x="3" y="60" width="10" height="3" fill="#4cb24c" />
    <rect x="35" y="56" width="10" height="3" fill="#f0c040" />
    <rect x="35" y="60" width="10" height="3" fill="#4cb24c" />
  </svg>
);
const ThumbOrange = () => (
  <svg width="64" height="60" viewBox="0 0 64 60">
    <rect x="0" y="0" width="16" height="4" fill="#555" />
    <rect x="43" y="0" width="20" height="9" fill="#eee" />
    <rect x="0" y="12" width="64" height="36" fill="#f1f1f1" stroke="#ddd" strokeWidth="0.5" />
    <path d="M4 30L16 21L27 26L38 36L49 36L60 39" fill="none" stroke="#f0a060" strokeWidth="0.9" />
    <path d="M4 42H60" stroke="#6aa9d8" strokeWidth="0.8" />
  </svg>
);

/* ---------- Ribbon pictures ---------- */
const IConnector = () => (
  <svg width="28" height="26" viewBox="0 0 28 26" fill="none">
    <rect x="2" y="1" width="10" height="12" stroke="#4e8cb8" />
    <rect x="13" y="15" width="11" height="10" stroke="#4e8cb8" />
    <path d="M12 7h6.500v7" stroke="#444" />
    <rect x="5.500" y="6" width="2" height="2" fill="#f0a020" />
    <rect x="17.500" y="19" width="2" height="2" fill="#f0a020" />
  </svg>
);
const IRapid = () => (
  <svg width="24" height="26" viewBox="0 0 24 26" fill="none">
    <rect x="4" y="5" width="15" height="8" fill="#fff" stroke="#2f7fbf" />
    <path d="M11.500 1l-2 2h4zM1 9l2-2v4zM22 9l-2-2v4zM11.500 16l-2-2h4z" fill="#1e7fc6" />
    <circle cx="4" cy="9" r="1" fill="#35a853" />
    <circle cx="19" cy="9" r="1" fill="#35a853" />
    <rect x="4" y="18" width="15" height="7" stroke="#2f7fbf" />
  </svg>
);
const IChain = () => (
  <svg width="26" height="26" viewBox="0 0 26 26" fill="none">
    <rect x="2" y="2" width="8" height="6" stroke="#3aa03a" />
    <path d="M10 5h5v5" stroke="#555" />
    <rect x="11" y="10" width="7" height="6" stroke="#3a90c8" />
    <path d="M18 13h2v5" stroke="#555" />
    <rect x="17" y="18" width="7" height="6" stroke="#3a90c8" />
    <path d="M2 2h1M10 2h-1M2 8h1M10 8h-1" stroke="#2a2" strokeWidth="2" />
  </svg>
);
const ITree = () => (
  <svg width="26" height="26" viewBox="0 0 26 26" fill="none">
    <rect x="8" y="1" width="10" height="8" stroke="#3aa03a" />
    <path d="M13 9v6M4 19v-4h18v4M13 15v4" stroke="#555" />
    <rect x="1" y="19" width="6.500" height="6" stroke="#2f90d0" />
    <rect x="9.500" y="19" width="6.500" height="6" stroke="#2f90d0" />
    <rect x="18" y="19" width="6.500" height="6" stroke="#2f90d0" />
    <path d="M8 1h2M16 1h2M8 9h2M16 9h2" stroke="#2a2" strokeWidth="2" />
  </svg>
);
const IClone = () => (
  <svg width="26" height="28" viewBox="0 0 26 28" fill="none" stroke="#a9a9a9">
    <rect x="1" y="6" width="14" height="13" strokeDasharray="2 1" />
    <rect x="13" y="1" width="11" height="10" />
    <path d="M8 8l11 11-5 0 2 6-2 1-3-6-3 3z" fill="#fff" />
  </svg>
);
const ISnap = () => (
  <svg width="26" height="26" viewBox="0 0 26 26" fill="none">
    <path d="M1 3h24M8 3v10" stroke="#2a8ad0" />
    <rect x="14" y="14" width="9" height="8" stroke="#2a8ad0" />
    <path d="M10 14a5 5 0 1 0 0 9" stroke="#444" strokeWidth="2.500" />
    <rect x="8" y="12.500" width="3" height="3" fill="#e53030" />
    <rect x="8" y="21.500" width="3" height="3" fill="#999" />
  </svg>
);
const IArrange = () => (
  <svg width="28" height="26" viewBox="0 0 28 26" fill="none">
    <rect x="4" y="5" width="8" height="7" stroke="#2a8ad0" />
    <rect x="17" y="5" width="8" height="7" stroke="#2a8ad0" />
    <rect x="4" y="15" width="8" height="7" stroke="#2a8ad0" />
    <path d="M8 1v24M1 8.500h27" stroke="#d0342c" />
  </svg>
);
const IBrush = () => (
  <svg width="20" height="26" viewBox="0 0 20 26">
    <path d="M8.500 0h3v9h-3z" fill="#1f6fb0" />
    <path d="M7 9h6l1 4H6z" fill="#2a86c8" />
    <path d="M4 13h12v7H4z" fill="#c98a4b" />
    <path d="M4 20h12v5l-2-1.500-2 1.500-2-1.500-2 1.500-2-1.500-2 1.500z" fill="#2b82c4" />
  </svg>
);
const ISpell = () => (
  <svg width="26" height="26" viewBox="0 0 26 26">
    <text x="0" y="9" fontSize="9" fontFamily={SANS} fill="#1f6fb0">ABC</text>
    <path d="M8 16l4 5 9-11" fill="none" stroke="#1aa33a" strokeWidth="3" />
  </svg>
);
const IChange = () => (
  <svg width="26" height="26" viewBox="0 0 26 26" fill="none" stroke="#b5b5b5">
    <ellipse cx="13" cy="5" rx="7" ry="4.500" />
    <rect x="8" y="14" width="10" height="9" />
    <path d="M13 9.500V14M5 14h3M18 14h3M5 23h3M18 23h3" />
  </svg>
);

const tools = [
  <rect key="a" x="1" y="1" width="10" height="9" fill="none" stroke="#4a86b4" />,
  <text key="b" x="1" y="10" fontFamily={SERIF} fontSize="12" fill="#2f6fa8">A</text>,
  <path key="c" d="M1 1h10v7H6l-2 3V8H1z" fill="none" stroke="#4a86b4" />,
  <path key="d" d="M1 1l10 10" stroke="#2f6fa8" strokeWidth="1" />,
  <path key="e" d="M2 11l2-5 4-4 3 3-4 4z" fill="#666" />,
  <circle key="f" cx="6" cy="6" r="5" fill="none" stroke="#4a86b4" />,
  <g key="g"><rect x="0.500" y="2" width="11" height="8" fill="none" stroke="#4a86b4" /><rect x="2" y="4" width="4" height="2" fill="#4a86b4" /></g>,
  <path key="h" d="M1 11L10 2M6 2h5v5" fill="none" stroke="#2f6fa8" strokeWidth="1.200" />,
  <path key="i" d="M2 1c6 0 8 4 8 10" fill="none" stroke="#444" strokeWidth="1.100" />,
  <path key="j" d="M2 4l4-3 4 3-2 1 3 6-3-1-2 2-2-6z" fill="#777" />,
];

const ticks = Array.from({ length: 256 }, (_, i) => i);
const rulerLabels = Array.from({ length: 26 }, (_, i) => 110 + i * 10);
const weeks = [
  ['- 16 Aug', 618, 55],
  ['17 Aug - 20 Aug', 675.5, 55],
  ['21 Aug - 22 Aug', 733, 55],
  ['23 Aug - 24 Aug', 790.6, 55],
  ['27 Aug - 28 Aug', 848, 55],
  ['29 Aug - 30 Aug', 905.7, 55],
  ['31 Aug - 3 Sep', 963, 55],
  ['4 Sep - 5 Sep', 1021, 55.7],
] as const;

const Dia = ({ x, y, label, r = 14, fill = '#fde8bd' }: { x: number; y: number; label?: string; r?: number; fill?: string }) => (
  <g>
    <path d={`M${x} ${y - r}L${x + r} ${y}L${x} ${y + r}L${x - r} ${y}Z`} fill={fill} stroke="#d6c79d" />
    {label && (
      <text x={x} y={y + 2.5} textAnchor="middle" fontFamily={SERIF} fontWeight="700" fontSize="7.5" fill="#333">{label}</text>
    )}
  </g>
);

const Canvas = () => (
  <CanvasSvg viewBox="600 114 553 424">
    <defs>
      <clipPath id="c12"><rect x="800" y="390" width="40" height="12" /></clipPath>
      <clipPath id="c20"><rect x="1020" y="500" width="60" height="37" /></clipPath>
      <linearGradient id="box9" x1="0" y1="0" x2="0" y2="1">
        <stop offset="0" stopColor="#f8f8f8" />
        <stop offset="1" stopColor="#e2e2e2" />
      </linearGradient>
    </defs>
    <path d="M600 114.500H1152.500V538" fill="none" stroke="#444" strokeWidth="1.500" />
    <text x="675" y="127" fontFamily={SANS} fontSize="14" fill="#555">PERT Chart: Software Development</text>
    <text x="1024" y="151" fontFamily={SERIF} fontWeight="700" fontSize="7.500" fill="#111">2018</text>
    {weeks.map(([t, x, w]) => (
      <g key={t}>
        <rect x={x} y={153} width={w} height={14} fill="#00409a" />
        <text x={x + w / 2} y={162.500} textAnchor="middle" fontFamily={VERDANA} fontWeight="700" fontSize="6" fill="#fff">{t}</text>
      </g>
    ))}
    <g fill="none" stroke="#666">
      <path d="M600 195H688" stroke="#999" />
      <path d="M717 195H1088.500V385" />
      <path d="M600 298.500H1088" />
      <path d="M600 333.500H688" stroke="#999" />
      <path d="M717 333.500H1088" stroke="#999" strokeWidth="1.600" />
      <path d="M600 367.500H688" stroke="#999" />
      <path d="M717 367.500H1088" />
    </g>
    <path d="M689 195l-4-2v4zM689 333.500l-4-2v4zM689 367.500l-4-2v4z" fill="#999" />
    <Dia x={703} y={195} label="5" />
    <Dia x={703} y={333.500} label="10" />
    <rect x="689" y="360" width="28" height="15" rx="1" fill="url(#box9)" stroke="#ccc" />
    <text x="703" y="370" textAnchor="middle" fontFamily={SERIF} fontWeight="700" fontSize="7.500" fill="#333">9</text>

    <path d="M600 402H805M832 402H914" fill="none" stroke="#f03030" />
    <path d="M914 402H1030" fill="none" stroke="#a93a3a" strokeWidth="1.500" />
    <path d="M1034 402l-6-3v6zM810 402l-4-2v4z" fill="#c01010" />
    <g clipPath="url(#c12)">
      <rect x="805" y="394.500" width="27" height="14" fill="#f4f4f4" stroke="#e82020" strokeWidth="1.300" />
      <text x="818.500" y="405" textAnchor="middle" fontFamily={SERIF} fontWeight="700" fontSize="7.500" fill="#8a1a1a">12</text>
    </g>
    <Dia x={1048} y={401} label="16" fill="#fedd9e" />
    <path d="M1048 415V524" stroke="#f04040" />
    <path d="M1048 527l-2.500-5h5z" fill="#d01010" />
    <g clipPath="url(#c20)">
      <Dia x={1048} y={541} />
    </g>
    <path d="M1088.500 385V538" stroke="#f02020" />
    <path d="M1088.500 384.500H1101" stroke="#b01010" strokeWidth="1.300" />
    <path d="M1105 384.500l-5-2.500v5z" fill="#b01010" />
    <path d="M1129 361L1153 385L1129 409L1105 385Z" fill="#ffbdbd" stroke="#a9a9a9" />
    <text x="1129" y="384" textAnchor="middle" fontFamily={SERIF} fontWeight="700" fontSize="8.500" letterSpacing="0.5" fill="#333">Finish</text>
    <text x="1129" y="390" textAnchor="middle" fontFamily={SERIF} fontWeight="700" fontSize="5" fill="#333">4 Sep 2018</text>
  </CanvasSvg>
);

const swatches = ['#f0f2fa', '#e3e5f4', '#e2d8f1', '#e1c7ea', '#e8bfe5', '#ef9fcb', '#e4bfa8', '#6aa9bc', '#6ec4f4', '#4a86c4', '#3a5c9c', '#4b2a9c', '#7b46b8', '#52288a', '#5a1a6c', '#a0056e', '#5a340f', '#ffffff'];

const libItems: { label: string; svg: React.ReactNode }[] = [
  { label: 'Title', svg: <rect x="22" y="3" width="42" height="40" fill="#eef1f6" /> },
  {
    label: 'Time interval',
    svg: (
      <g>
        <text x="28" y="18">2011</text>
        <rect x="23.500" y="20" width="39" height="16" fill="#00409a" stroke="#7d9fd0" strokeWidth="0.5" />
      </g>
    ),
  },
  { label: 'Project start', svg: <path d="M43 2L64 22.500L43 43L22 22.500Z" fill="#c9eafd" stroke="#b5c8d6" /> },
  { label: 'Project finish', svg: <path d="M43 2L64 22.500L43 43L22 22.500Z" fill="#ffbdbd" stroke="#cfa9a9" /> },
  { label: 'Project', svg: <path d="M29 9H57L64 15V29L57 35H29L22 29V15Z" fill="#e2e2e2" stroke="#999" /> },
  {
    label: 'Phase',
    svg: (
      <g>
        <defs>
          <linearGradient id="phg" x1="0" y1="0" x2="1" y2="1">
            <stop offset="0" stopColor="#eee" />
            <stop offset="1" stopColor="#cfcfcf" />
          </linearGradient>
        </defs>
        <path d="M29 9H63L57 35H22Z" fill="url(#phg)" stroke="#999" />
      </g>
    ),
  },
  {
    label: 'Task',
    svg: (
      <g>
        <defs>
          <linearGradient id="tkg" x1="0" y1="0" x2="0" y2="1">
            <stop offset="0" stopColor="#f7f7f7" />
            <stop offset="1" stopColor="#dcdcdc" />
          </linearGradient>
        </defs>
        <rect x="22" y="9" width="42" height="26" fill="url(#tkg)" stroke="#aaa" />
      </g>
    ),
  },
];

export default function App() {
  return (
    <Stage>
      <Global />

      <GanttWindow>
        <MacTitle>
          <Lights>
            <Light $c="#f2554d" />
            <Light $c="#f6b73c" />
            <Light $c="#3fc24b" />
          </Lights>
          <DocGlyph />
          software_development_scrum(1).cdpz : Gantt Chart - Software Development
        </MacTitle>
        <MacToolbar>
          <ToolItem $w={44}>
            <ToolButton $w={32} $dark><Mini k="solutions" /></ToolButton>
            <ToolLabel>Solutions</ToolLabel>
          </ToolItem>
          <ToolItem $w={152}>
            <Segments>
              <Segment><Mini k="v1" /></Segment>
              <Segment $on><Mini k="v2" /></Segment>
              <Segment><Mini k="v3" /></Segment>
              <Segment><Mini k="v4" /></Segment>
              <Segment><Mini k="v5" /></Segment>
            </Segments>
            <ToolLabel>Select View</ToolLabel>
          </ToolItem>
          {toolItems.map(t => (
            <ToolItem key={t.label} $w={t.w} $ml={t.ml} $dim={t.dim}>
              <ToolButton $w={t.bw} $dim={t.dim}><Mini k={t.k} /></ToolButton>
              <ToolLabel>{t.label}</ToolLabel>
            </ToolItem>
          ))}
        </MacToolbar>
        <MacBody>
          <Sidebar>
            <SearchRow>
              <SearchBox><Search size={9} color="#888" /> Search</SearchBox>
              <svg width="14" height="14" viewBox="0 0 14 14">
                <path d="M7 1l6 6-6 6-6-6z" fill="none" stroke="#b44fd0" strokeWidth="1.500" />
                <path d="M7 4l3 3-3 3-3-3z" fill="#cc66d8" />
              </svg>
            </SearchRow>
            <TreeWrap>
              <Tree>
                <TreeHead $l={7} $mt={-6}>Visual Reports</TreeHead>
                <TreeHead $l={16} $mt={3}>Examples</TreeHead>
                <ThumbBox $ml={23} $mt={1}><ThumbGantt /></ThumbBox>
                <Caption $mt={0}>Company News...</Caption>
                <TreeHead $l={16} $mt={3}>Reports</TreeHead>
                <ThumbBox $ml={40} $mt={3}><ThumbAcc /></ThumbBox>
                <Caption $mt={0}>Accumulative...</Caption>
                <ThumbBox $ml={40} $mt={5}><ThumbActuals /></ThumbBox>
                <Caption $mt={2}>Actuals per ...</Caption>
                <ThumbBox $ml={40} $mt={4}><ThumbAll /></ThumbBox>
                <Caption $mt={-1}>All in One I...</Caption>
                <ThumbBox $ml={39} $mt={5}><ThumbOrange /></ThumbBox>
              </Tree>
              <SideScroll><SideThumb /></SideScroll>
            </TreeWrap>
            <SideFoot><Check />Only Installed Solutions</SideFoot>
          </Sidebar>
          <TableWrap>
            <TableHead>
              <HeadCell $bold>#</HeadCell>
              <HeadCell />
              <HeadCell>Name</HeadCell>
              <HeadCell>Duration</HeadCell>
              <Timehead>
                <Weeks>
                  <Week $w={113}>12 Aug 2018</Week>
                  <Week $w={131}>w34, 19 Aug 2018</Week>
                  <Week $w={131} $dim>w35, 26 Aug 2018</Week>
                </Weeks>
                <Days>
                  {[13, 14, 15, 16, 17, 18, 19, 20, 21, 22, 23, 24, 25, 26, 27].map(d => (
                    <Day key={d}>{d}</Day>
                  ))}
                </Days>
              </Timehead>
            </TableHead>
            <RowsBox>
              {rows.map((r, i) => (
                <Row key={r.name} $alt={i % 2 === 1} $tone={r.t}>
                  <NumCell>{i + 1}</NumCell>
                  <IconCell><RowGlyph /></IconCell>
                  <NameCell $l={r.s ? 2 : r.l === 1 ? 11 : 22} $bold={!!r.s}>
                    {r.s && <Collapse />}
                    {r.name}
                  </NameCell>
                  <DurCell $bold={!!r.s}>{r.d}</DurCell>
                  <div />
                </Row>
              ))}
            </RowsBox>
            <PillRow><Pill /></PillRow>
            <TabRow><SheetTab>Software Development</SheetTab></TabRow>
            <FootBar>
              <FootCell $w={15}><Plus size={8} /></FootCell>
              <FootCell $w={12} />
              <FootCell $w={18}><Settings size={7} /></FootCell>
              <FootCell $w={5} />
              Budget: $ 5,000
            </FootBar>
            <GanttChart />
          </TableWrap>
        </MacBody>
      </GanttWindow>

      <Dashboard>
        <DashHeader>
          <DashTitle><b>Dashboard</b>, 2018-Aug-14</DashTitle>
          <DashSub>Software Development</DashSub>
        </DashHeader>
        <InfoBar>
          <InfoCol $w={612}>
            <InfoLine><InfoKey $w={98}>Project manager:</InfoKey><InfoVal>John Smith</InfoVal></InfoLine>
            <InfoLine><InfoKey $w={98}>Goal:</InfoKey><InfoVal>New software</InfoVal></InfoLine>
          </InfoCol>
          <InfoCol $w={147}>
            <InfoLine><InfoKey $w={40}>Start:</InfoKey><InfoVal>2018-08-09</InfoVal></InfoLine>
            <InfoLine><InfoKey $w={40}>Finish:</InfoKey><InfoVal>2018-09-04</InfoVal></InfoLine>
          </InfoCol>
          <InfoCol $w={160}>
            <InfoLine><InfoKey $w={60}>Duration:</InfoKey><InfoVal>18.0 day(s)</InfoVal></InfoLine>
            <InfoLine><InfoKey $w={60}>Complete:</InfoKey><InfoVal>42%</InfoVal></InfoLine>
            <InfoLine><InfoKey $w={60}>Budget:</InfoKey><InfoVal>$ 5,000</InfoVal></InfoLine>
          </InfoCol>
        </InfoBar>
        <Panels>
          <PanelCol>
            <PanelHead $h={33} $pt={15}>Tasks</PanelHead>
            <PanelBox $h={300}>
              <PieSvg width="289" height="298" viewBox="165 579 289 298">
                <circle cx="309" cy="729" r="99" fill="#f2f2f2" stroke="#aaa" strokeWidth="0.6" strokeDasharray="1 1" />
                <path d="M309 729L408 729A99 99 0 1 1 281 634Z" fill="#6fc66b" />
                <path d="M309 729L281 634A99 99 0 0 1 339 635Z" fill="#ffbc05" stroke="#fff" strokeWidth="0.6" />
                <path d="M309 729L339 641A93 93 0 0 1 402 729Z" fill="#ff575e" stroke="#fff" strokeWidth="0.6" />
                <path d="M309 729L404 722" stroke="#fff" strokeWidth="1" />
                <text x="407" y="725" fill="#3e7a3e">70%</text>
                <text x="330" y="628" fill="#c83a3a">20%</text>
              </PieSvg>
              <LinkList>
                <LinkA>Late tasks</LinkA>
                <div><LinkA>On time tasks</LinkA><Pct>10%</Pct></div>
                <LinkA>Early tasks</LinkA>
              </LinkList>
            </PanelBox>
          </PanelCol>
          <PanelCol>
            <PanelHead $h={33} $pt={15}>Resources and Tasks</PanelHead>
            <PanelBox $h={300}>
              <PieSvg width="289" height="298" viewBox="465 579 289 298">
                <circle cx="609" cy="729" r="111" fill="#f2f2f2" stroke="#aaa" strokeWidth="0.6" strokeDasharray="1 1" />
                <path d="M609 729L720 729A111 111 0 0 1 537 813Z" fill="#6fc66b" />
                <path d="M609 729L537 813A111 111 0 0 1 503 761Z" fill="#ffbc05" />
                <path d="M609 729L522 755A91 91 0 1 1 700 729Z" fill="#ff575e" stroke="#fff" strokeWidth="0.7" />
                <path d="M609 729L722 707" stroke="#fff" strokeWidth="1" />
                <path d="M609 729L538 788" stroke="#ffe9a8" strokeWidth="0.8" />
                <text x="720" y="705" fill="#3e7a3e">36%</text>
                <text x="477" y="769" fill="#c83a3a">55%</text>
                <text x="519" y="799" fill="#a98e18">9%</text>
              </PieSvg>
              <RateLink>Resources rate</RateLink>
            </PanelBox>
          </PanelCol>
          <PanelCol>
            <PanelHead $h={33} $pt={15}>Project Complete</PanelHead>
            <PanelBox $h={175}>
              <GaugeTop>% (m/h)</GaugeTop>
              <GaugeWrap $mt={14}>
                <BarPart $w={266} $c="#7dbdf0" />
                <Marker $x={0} $c="#f9c93a" $h={14} />
              </GaugeWrap>
              <GaugeLabels>
                % (m/h)
                <GaugeEnd>100%</GaugeEnd>
              </GaugeLabels>
              <LinksBlock>
                <LinkA>Late tasks in progress</LinkA>
                <LinkA>Not started</LinkA>
              </LinksBlock>
            </PanelBox>
            <PanelHead $h={29} $pt={11}>Cost and Budget</PanelHead>
            <PanelBox $h={160}>
              <GaugeWrap $mt={43}>
                <BarPart $w={159} $c="#e6211c" />
                <BarPart $w={1} $c="#fff" />
                <BarPart $w={106} $c="#8ec6f0" />
                <Marker $x={73} $c="#e6211c" $h={15} />
              </GaugeWrap>
            </PanelBox>
          </PanelCol>
        </Panels>
      </Dashboard>

      <DiagramWindow>
        <WinTitle>
          ConceptDraw DIAGRAM - [Pert - Pert chart]
          <WinControls>
            <Minus size={11} />
            <Square size={10} />
            <X size={12} />
          </WinControls>
        </WinTitle>
        <WinRow2>
          <svg width="9" height="10" viewBox="0 0 9 10"><rect x="0.500" y="0.500" width="8" height="9" fill="#dbe9f6" stroke="#2e6fa8" /><rect x="0.500" y="0.500" width="8" height="2.500" fill="#2e6fa8" /></svg>
          <span>▾</span>
          <svg width="10" height="10" viewBox="0 0 10 10"><circle cx="5" cy="5" r="5" fill="#1d6fc4" /><text x="5" y="8" textAnchor="middle" fontSize="8" fontWeight="700" fill="#fff">?</text></svg>
          <span>▾</span>
          <svg width="8" height="8" viewBox="0 0 8 8"><path d="M1 4l3-3 3 3M2 4v3h4V4" fill="none" stroke="#777" /></svg>
          <Minus size={7} />
          <Square size={7} />
          <X size={9} />
        </WinRow2>
        <Ribbon>
          <RibbonGroup $w={71}>
            <GroupBody>
              <SelectStack>
                <span>▫ Select Shape ▾</span>
                <span>▫ Select Text</span>
              </SelectStack>
            </GroupBody>
            <GroupName>Select</GroupName>
          </RibbonGroup>
          <RibbonGroup $w={85}>
            <GroupBody>
              <ToolGrid>
                {tools.map((t, i) => (
                  <svg key={i} width="12" height="12" viewBox="0 0 12 12">{t}</svg>
                ))}
              </ToolGrid>
            </GroupBody>
            <GroupName>Tools</GroupName>
          </RibbonGroup>
          <RibbonGroup $w={196}>
            <GroupBody>
              <BigItem $w={48}><BigIcon><IConnector /></BigIcon>Connector{'\n'}▾</BigItem>
              <BigItem $w={30}><BigIcon><IRapid /></BigIcon>Rapid{'\n'}Draw</BigItem>
              <BigItem $w={28}><BigIcon><IChain /></BigIcon>Chain</BigItem>
              <BigItem $w={29}><BigIcon><ITree /></BigIcon>Tree</BigItem>
              <BigItem $w={29} $dim><BigIcon><IClone /></BigIcon>Clone{'\n'}▾</BigItem>
              <BigItem $w={28}><BigIcon><ISnap /></BigIcon>Snap</BigItem>
            </GroupBody>
            <GroupName>Flowchart</GroupName>
          </RibbonGroup>
          <RibbonGroup $w={67}>
            <GroupBody>
              <BigItem $w={37}><BigIcon><IArrange /></BigIcon>Arrange{'\n'}&amp; Size</BigItem>
              <BigItem $w={29}><BigIcon><IBrush /></BigIcon>Format</BigItem>
            </GroupBody>
            <GroupName>Panels</GroupName>
          </RibbonGroup>
          <RibbonGroup $w={101}>
            <GroupBody>
              <BigItem $w={37}><BigIcon><FaBinoculars size={22} color="#213c60" /></BigIcon>Find &amp;{'\n'}Replace</BigItem>
              <BigItem $w={28}><BigIcon><ISpell /></BigIcon>Spelling</BigItem>
              <BigItem $w={34} $dim><BigIcon><IChange /></BigIcon>Change{'\n'}Shape ▾</BigItem>
            </GroupBody>
            <GroupName>Editing</GroupName>
          </RibbonGroup>
        </Ribbon>
        <Workspace>
          <MainCol>
            <RulerRow>
              <RulerSvg viewBox="640 100 512 14">
                {ticks.map(i => (
                  <path key={i} d={`M${640 + i * 2} ${i % 5 === 0 ? 108 : 110.500}V113`} stroke="#888" strokeWidth="0.5" />
                ))}
                {rulerLabels.map((n, i) => (
                  <text key={n} x={647 + i * 19.7} y="107">{n}</text>
                ))}
                <path d="M1029 103V113" stroke="#e02020" strokeWidth="0.8" />
              </RulerSvg>
              <RulerArrowBox><ScrollArrow $dir="up" /></RulerArrowBox>
            </RulerRow>
            <CanvasRow>
              <Canvas />
              <VScroll>
                <ScrollThumb />
                <ScrollArrow $dir="down" />
              </VScroll>
            </CanvasRow>
            <HScrollRow>
              <HTrack />
              <HThumb />
              <HArrow><ScrollArrow $dir="right" /></HArrow>
              <HCorner />
            </HScrollRow>
            <PalHead><Pin size={9} /><X size={10} /></PalHead>
            <Palette>
              {swatches.map(c => <Swatch key={c} $c={c} />)}
              <PalSpin><ChevronUp size={8} /><ChevronDown size={8} /></PalSpin>
            </Palette>
          </MainCol>
          <Library>
            <LibHead>
              <LibTitle>Library</LibTitle>
              <Pin size={9} />
              <X size={10} />
            </LibHead>
            <LibPick>
              <ChevronLeft size={10} strokeWidth={3} />
              <ChevronRight size={10} strokeWidth={3} />
              <LibSelect>PERT charts</LibSelect>
            </LibPick>
            <LibList>
              <LibItems>
                {libItems.map(it => (
                  <LibItem key={it.label}>
                    <svg width="86" height="45" viewBox="0 0 86 45">{it.svg}</svg>
                    {it.label}
                  </LibItem>
                ))}
              </LibItems>
              <LibScroll>
                <ChevronUp size={9} />
                <LibThumb />
                <SpinDown><ChevronDown size={9} /></SpinDown>
              </LibScroll>
            </LibList>
          </Library>
          <FormatTab>Format</FormatTab>
        </Workspace>
        <StatusBar>
          <StatusSlot $ml={0}><Hand size={9} /></StatusSlot>
          <StatusSlot $ml={8}><svg width="9" height="9" viewBox="0 0 9 9"><rect x="0.500" y="0.500" width="6" height="6" fill="none" stroke="#fff" strokeDasharray="1 1" /><circle cx="6" cy="6" r="2" fill="none" stroke="#fff" /></svg></StatusSlot>
          <StatusSlot $ml={9}><svg width="9" height="9" viewBox="0 0 9 9"><rect x="1" y="1" width="7" height="7" fill="#fff" opacity="0.6" /></svg></StatusSlot>
          <StatusSlot $ml={5}><Minus size={8} /></StatusSlot>
          <StatusSlot $ml={1}><ZoomSlider /></StatusSlot>
          <StatusSlot $ml={0}><Plus size={8} /></StatusSlot>
          <StatusSlot $ml={12}>78%</StatusSlot>
        </StatusBar>
      </DiagramWindow>
    </Stage>
  );
}
